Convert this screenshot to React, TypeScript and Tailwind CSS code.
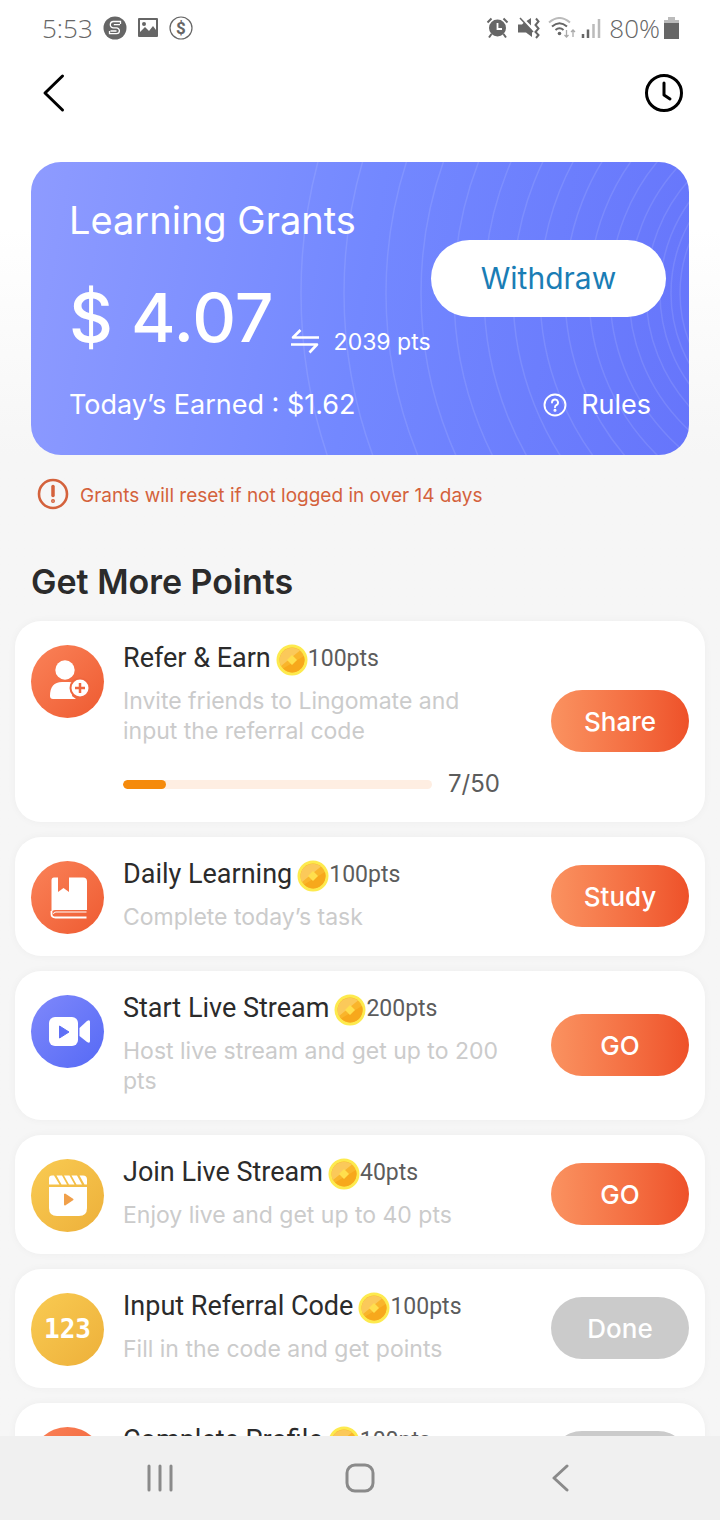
import React from 'react';

type Task = {
  title: string;
  points: string;
  description?: string;
  action: string;
  icon: React.ReactNode;
  color: string;
  done?: boolean;
  progress?: { current: number; total: number };
};

const ORANGE = 'bg-linear-to-br from-[#fa8258] to-[#ee5a30]';
const BLUE = 'bg-linear-to-br from-[#7f88fb] to-[#5669f5]';
const YELLOW = 'bg-linear-to-br from-[#f9cb52] to-[#edb03a]';

const RINGS = [515, 472, 430, 395, 362, 332, 303, 276, 251, 227, 206, 187, 170, 156, 145, 136];

function StatusBar() {
  return (
    <div className="flex h-14 shrink-0 items-center justify-between pr-[41px] pl-[42px] text-[#666]">
      <div className="flex items-center gap-[10px]">
        <span className="font-['Open_Sans',sans-serif] text-[26px] font-light">5:53</span>
        <svg width="24" height="24" viewBox="0 0 24 24">
          <circle cx="12" cy="12" r="11.500" fill="#666" />
          <path d="M17.500 8V5.500h-7a3.200 3.200 0 0 0 0 6.400h3a2.900 2.900 0 0 1 0 5.800H6.500V15M17 8.700h-6.200M7.500 15h6" fill="none" stroke="#fff" strokeWidth="1.300" />
        </svg>
        <svg width="22" height="22" viewBox="0 0 22 22">
          <path
            fill="#666"
            fillRule="evenodd"
            d="M2 1h18a1 1 0 0 1 1 1v17a1 1 0 0 1-1 1H2a1 1 0 0 1-1-1V2a1 1 0 0 1 1-1zm1 2v12l5-5 4 4 4-5 3 4V3zm4 2a2 2 0 1 1 0 4 2 2 0 0 1 0-4z"
          />
        </svg>
        <svg width="24" height="24" viewBox="0 0 24 24">
          <circle cx="12" cy="12" r="11" fill="none" stroke="#666" strokeWidth="1.200" />
          <text x="12" y="18" textAnchor="middle" fontSize="17" fontWeight="700" fontFamily="Roboto, sans-serif" fill="#666">$</text>
        </svg>
      </div>
      <div className="flex items-center gap-2">
        <svg width="23" height="22" viewBox="0 0 23 22">
          <circle cx="11.500" cy="11" r="8.500" fill="#666" />
          <path d="M11.500 6v6h4.500" fill="none" stroke="#fff" strokeWidth="1.800" />
          <path d="M1.500 5.500l4-4M21.500 5.500l-4-4M5.500 17L3 20.500M17.500 17l2.500 3.500" stroke="#666" strokeWidth="2" />
        </svg>
        <svg width="23" height="22" viewBox="0 0 23 22">
          <path d="M1 7.500h4l2-2 8 8V20l-6-4.500H1zM9.500 4l4.500-3v7.500z" fill="#666" />
          <path d="M3 1l13 14" stroke="#666" strokeWidth="1.500" />
          <path d="M19 1.500l2.500 3-3 3.500 3 3.500-3 3.500 3 3-2.500 3" fill="none" stroke="#666" strokeWidth="2" />
        </svg>
        <svg width="29" height="22" viewBox="0 0 29 22">
          <path d="M1 5.500q10.500-9 21 0" fill="none" stroke="#bbb" strokeWidth="2" />
          <path d="M4 9.500q7.500-6.500 15 0M7.500 13q4-3.500 8 0" fill="none" stroke="#666" strokeWidth="2" />
          <circle cx="11.500" cy="16.500" r="1.800" fill="#666" />
          <path d="M18.500 13v7m-2-2l2 2 2-2M25 20v-7m-2 2l2-2 2 2" fill="none" stroke="#aaa" strokeWidth="1.300" />
        </svg>
        <div className="-ml-1 flex items-center gap-2">
          <svg width="20" height="21" viewBox="0 0 20 21">
            <path d="M2 16v4M7 11.500V20" stroke="#666" strokeWidth="2.500" />
            <path d="M12.500 6v14M18 1v19" stroke="#bbb" strokeWidth="2.500" />
          </svg>
          <span className="font-['Open_Sans',sans-serif] text-[26px] font-light">80%</span>
          <svg width="15" height="22" viewBox="0 0 15 22" className="-ml-1">
            <path d="M4 0h7v3h4v4H0V3h4z" fill="#bbb" />
            <path d="M0 6h15v16H0z" fill="#666" />
          </svg>
        </div>
      </div>
    </div>
  );
}

function Header() {
  return (
    <header className="flex h-[74px] shrink-0 items-center justify-between px-9">
      <button type="button" aria-label="Back">
        <svg width="36" height="40" viewBox="0 0 36 40" fill="none" stroke="#000" strokeWidth="3" strokeLinecap="round" strokeLinejoin="round">
          <path d="M26.500 3L9 20l17.500 17" />
        </svg>
      </button>
      <button type="button" aria-label="History">
        <svg width="40" height="40" viewBox="0 0 40 40" fill="none" stroke="#000" strokeWidth="3" strokeLinecap="round">
          <circle cx="20" cy="20" r="17.500" />
          <path d="M20 10v12l6 4" strokeLinejoin="round" />
        </svg>
      </button>
    </header>
  );
}

function GrantsCard() {
  return (
    <section className="relative mx-[31px] overflow-hidden rounded-[30px] bg-linear-100 from-[#8e9bff] via-[#7388ff] to-[#6675fb] pt-[34px] pb-[34px] text-white">
      <svg className="absolute top-0 right-0" width="658" height="293" viewBox="0 0 658 293" fill="none" stroke="#fff" strokeOpacity="0.11" strokeWidth="1.500">
        {RINGS.map((r) => (
          <circle key={r} cx="785" cy="131" r={r} />
        ))}
      </svg>
      <div className="relative flex items-center justify-between pr-[23px] pl-[38px]">
        <div className="whitespace-nowrap">
          <h1 className="text-[38px] leading-[48px]">Learning Grants</h1>
          <div className="mt-[30px] flex h-[86px] items-center">
            <span className="text-[68px] leading-[86px] font-medium">$ 4.07</span>
            <span className="mt-[50px] ml-4 flex items-center gap-[14px]">
              <svg width="30" height="28" viewBox="0 0 30 28" fill="none" stroke="#fff" strokeWidth="2.600" strokeLinejoin="round">
                <path d="M29 9.500H3L10.500 2M1 16.500h26L19.500 24.500" />
              </svg>
              <span className="text-[23px] leading-7">2039 pts</span>
            </span>
          </div>
        </div>
        <button type="button" className="h-[77px] w-[235px] shrink-0 rounded-full bg-white text-[30px] text-[#1a7db5]">
          Withdraw
        </button>
      </div>
      <div className="relative mt-[29px] flex items-center justify-between px-[38px] text-[27px] leading-8">
        <p>Today’s Earned : $1.62</p>
        <a href="#" className="flex items-center gap-[14px]">
          <svg width="24" height="24" viewBox="0 0 24 24" fill="none" stroke="#fff" strokeWidth="1.900" strokeLinecap="round">
            <circle cx="12" cy="12" r="10.500" />
            <path d="M9 9.500a3 3 0 1 1 4.300 2.700q-1.300.7-1.300 2" />
            <circle cx="12" cy="17.300" r="0.600" fill="#fff" />
          </svg>
          Rules
        </a>
      </div>
    </section>
  );
}

function Coin() {
  return (
    <svg width="32" height="32" viewBox="0 0 32 32" className="mt-1 ml-[5px] shrink-0">
      <circle cx="16" cy="16" r="15.500" fill="#fdea4e" />
      <circle cx="16" cy="16" r="12.500" fill="#f9b52b" />
      <path d="M5 22A12.500 12.500 0 0 1 24 6.500z" fill="#fbc95a" />
      <path d="M7 24.500A12.500 12.500 0 0 0 28 12z" fill="#f7a81c" />
      <path d="M16 11l5 5-5 5-5-5z" fill="#ffdf4d" />
    </svg>
  );
}

const UserPlusIcon = (
  <svg width="73" height="73" viewBox="0 0 73 73">
    <circle cx="34" cy="25" r="9.700" fill="#fff" />
    <path d="M31 37h7q4 0 6 2l-3 12 4 3H22q-3 0-3-3 0-14 12-14z" fill="#fff" />
    <circle cx="49" cy="43" r="10.500" fill="#f0673f" />
    <circle cx="49" cy="43" r="8.500" fill="#fff" />
    <path d="M49 38v10M44 43h10" stroke="#f0673f" strokeWidth="2.500" />
  </svg>
);

const BookIcon = (
  <svg width="73" height="73" viewBox="0 0 73 73">
    <path d="M23 16.500h4V31l5.500-4 5.500 4V16.500h14a4 4 0 0 1 4 4V49H24q-2 0-3.500 1.500v-31q0-3 2.500-3z" fill="#fff" />
    <path d="M20.500 50v3q0 3.500 4 3.500h31" fill="none" stroke="#fff" strokeWidth="1.800" />
    <path d="M55.500 51H25q-2.500 0-2.500 2" fill="none" stroke="#fff" strokeWidth="1" />
  </svg>
);

const VideoIcon = (
  <svg width="73" height="73" viewBox="0 0 73 73">
    <rect x="18" y="22" width="29" height="29" rx="6" fill="#fff" />
    <path d="M48.500 33L56 26q3-2 3 1v19q0 3-3 1l-7.500-6z" fill="#fff" />
    <path d="M28.500 31v12l9.500-6z" fill="#5f70f6" stroke="#5f70f6" strokeLinejoin="round" />
  </svg>
);

const ClapperIcon = (
  <svg width="73" height="73" viewBox="0 0 73 73">
    <path
      d="M21 16.500h2l5.500 9H18V19.500q0-3 3-3zM25.500 16.500h5.500l5 9h-5.500zM33 16.500h5.500l5 9H38zM40.500 16.500H46l5 9h-5.500zM48.500 16.500H52q4 0 4 4v5h-2.500z"
      fill="#fff"
    />
    <path d="M18 28h38v21q0 8-8 8H26q-8 0-8-8z" fill="#fff" />
    <path d="M34 35.500v10l7.500-5z" fill="#f0a04a" stroke="#f0a04a" strokeWidth="2" strokeLinejoin="round" />
  </svg>
);

const NumbersIcon = <span className="font-['DejaVu_Sans_Mono',monospace] text-[26px] font-bold text-white">123</span>;

const TASKS: Task[] = [
  {
    title: 'Refer & Earn',
    points: '100pts',
    description: 'Invite friends to Lingomate and input the referral code',
    action: 'Share',
    icon: UserPlusIcon,
    color: ORANGE,
    progress: { current: 7, total: 50 },
  },
  {
    title: 'Daily Learning',
    points: '100pts',
    description: 'Complete today’s task',
    action: 'Study',
    icon: BookIcon,
    color: ORANGE,
  },
  {
    title: 'Start Live Stream',
    points: '200pts',
    description: 'Host live stream and get up to 200 pts',
    action: 'GO',
    icon: VideoIcon,
    color: BLUE,
  },
  {
    title: 'Join Live Stream',
    points: '40pts',
    description: 'Enjoy live and get up to 40 pts',
    action: 'GO',
    icon: ClapperIcon,
    color: YELLOW,
  },
  {
    title: 'Input Referral Code',
    points: '100pts',
    description: 'Fill in the code and get points',
    action: 'Done',
    icon: NumbersIcon,
    color: YELLOW,
    done: true,
  },
  {
    title: 'Complete Profile',
    points: '100pts',
    action: 'Done',
    icon: UserPlusIcon,
    color: ORANGE,
    done: true,
  },
];

function TaskCard({ task }: { task: Task }) {
  return (
    <li className="flex rounded-[26px] bg-white px-4 pt-[21px] pb-[22px] shadow-[0_0_8px_rgba(0,0,0,0.04)]">
      <div className={`mt-[3px] flex size-[73px] shrink-0 items-center justify-center overflow-hidden rounded-full ${task.color}`}>
        {task.icon}
      </div>
      <div className="ml-[19px] min-w-0 flex-1 pb-[2px]">
        <div className="flex h-8 items-center font-['Roboto',sans-serif] whitespace-nowrap">
          <h3 className="text-[27px] leading-8 text-[#2b2b2b]">{task.title}</h3>
          <Coin />
          <span className="pt-[2px] text-[23px] leading-8 text-[#5c5c5c]">{task.points}</span>
        </div>
        {task.description && (
          <p className="mt-3 text-[23px] leading-[30px] text-[#cbcbcb]">{task.description}</p>
        )}
        {task.progress && (
          <div className="mt-6 flex h-7 items-center gap-4 pr-3">
            <div
              role="progressbar"
              aria-label={task.title}
              aria-valuenow={task.progress.current}
              aria-valuemax={task.progress.total}
              className="h-[9px] flex-1 overflow-hidden rounded-full bg-[#feeee2]"
            >
              <div
                className="h-full rounded-full bg-[#f58a0b]"
                style={{ width: `${(task.progress.current / task.progress.total) * 100}%` }}
              />
            </div>
            <span className="text-[24px] leading-7 text-[#5c5c5c]">
              {task.progress.current}/{task.progress.total}
            </span>
          </div>
        )}
      </div>
      <button
        type="button"
        className={`ml-[39px] h-[62px] w-[138px] shrink-0 self-center rounded-full text-[26px] font-medium text-white ${
          task.done ? 'bg-[#cbcbcb]' : 'bg-linear-to-r from-[#fa9260] to-[#ee5129]'
        }`}
      >
        {task.action}
      </button>
    </li>
  );
}

function NavBar() {
  return (
    <nav className="flex h-[84px] shrink-0 items-center bg-[#f0f0f0] px-[60px]">
      <button type="button" aria-label="Recent apps" className="flex flex-1 justify-center">
        <svg width="28" height="28" viewBox="0 0 28 28" stroke="#8a8a8a" strokeWidth="3" strokeLinecap="round">
          <path d="M3 2v24M14 2v24M25 2v24" />
        </svg>
      </button>
      <button type="button" aria-label="Home" className="flex flex-1 justify-center">
        <svg width="30" height="30" viewBox="0 0 30 30" fill="none" stroke="#8a8a8a" strokeWidth="3">
          <rect x="2" y="2" width="26" height="26" rx="8" />
        </svg>
      </button>
      <button type="button" aria-label="Back" className="flex flex-1 justify-center">
        <svg width="18" height="28" viewBox="0 0 18 28" fill="none" stroke="#8a8a8a" strokeWidth="3" strokeLinecap="round" strokeLinejoin="round">
          <path d="M16 2L3 14l13 12" />
        </svg>
      </button>
    </nav>
  );
}

export default function App() {
  return (
    <div className="flex h-screen flex-col bg-linear-to-b from-white from-15% to-[#f6f6f6] to-30% font-['Inter',sans-serif]">
      <StatusBar />
      <Header />
      <main className="min-h-0 flex-1 overflow-hidden pt-8">
        <GrantsCard />
        <div className="mt-[23px] flex h-8 items-center gap-[11px] px-[37px] text-[#d4623c]">
          <svg width="32" height="32" viewBox="0 0 32 32" fill="none" stroke="currentColor" strokeWidth="2.600" strokeLinecap="round">
            <circle cx="16" cy="16" r="14" />
            <path d="M16 8.500v9" strokeWidth="3.500" />
            <circle cx="16" cy="23" r="0.700" />
          </svg>
          <p className="pt-1 text-[19px]">Grants will reset if not logged in over 14 days</p>
        </div>
        <h2 className="mt-[49px] px-[31px] text-[34px] leading-[46px] font-semibold text-[#2b2b2b]">Get More Points</h2>
        <ul className="mt-4 flex flex-col gap-[15px] px-[15px]">
          {TASKS.map((task) => (
            <TaskCard key={task.title} task={task} />
          ))}
        </ul>
      </main>
      <NavBar />
    </div>
  );
}
